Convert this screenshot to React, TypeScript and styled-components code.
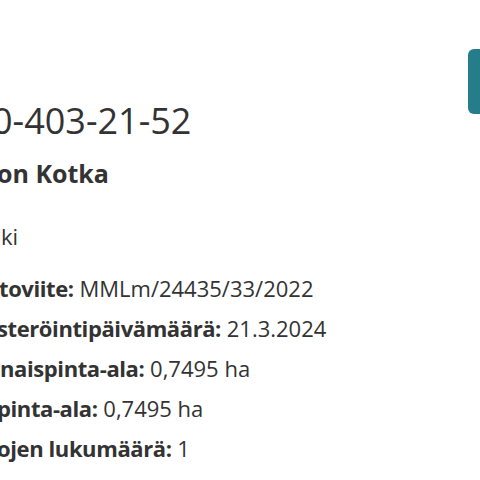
import styled, { createGlobalStyle } from "styled-components";

const GlobalStyle = createGlobalStyle`
  html, body {
    margin: 0;
    padding: 0;
    background: #ffffff;
    overflow: hidden;
  }
  body {
    font-family: "Open Sans", "Noto Sans", sans-serif;
    color: #333333;
  }
`;

const details = [
  { label: "toviite:", value: "MMLm/24435/33/2022", cut: 1 },
  { label: "steröintipäivämäärä:", value: "21.3.2024", cut: 3 },
  { label: "naispinta-ala:", value: "0,7495 ha", cut: 0 },
  { label: "pinta-ala:", value: "0,7495 ha", cut: 3 },
  { label: "ojen lukumäärä:", value: "1", cut: 3 },
];

export default function App() {
  return (
    <>
      <GlobalStyle />
      <Page>
        <Info>
          <Title $cut={8}>0-403-21-52</Title>
          <Name $cut={3}>on Kotka</Name>
          <Town>ki</Town>
          <List>
            {details.map((d) => (
              <Row key={d.label} $cut={d.cut}>
                <b>{d.label}</b> {d.value}
              </Row>
            ))}
          </List>
        </Info>
        <ActionButton aria-label="action" />
      </Page>
    </>
  );
}

const Page = styled.div`
  width: 480px;
  height: 480px;
  display: flex;
  justify-content: space-between;
  align-items: flex-start;
  overflow: hidden;
`;

const Info = styled.div`
  display: flex;
  flex-direction: column;
  padding-top: 99px;
`;

const Title = styled.h1<{ $cut: number }>`
  margin: 0 0 0 -${(p) => p.$cut}px;
  font-size: 36px;
  font-weight: 400;
  line-height: 44px;
  white-space: nowrap;
`;

const Name = styled.h2<{ $cut: number }>`
  margin: 10px 0 0 -${(p) => p.$cut}px;
  font-size: 25px;
  font-weight: 700;
  line-height: 40px;
  white-space: nowrap;
`;

const Town = styled.p`
  margin: 29px 0 0 1px;
  font-size: 22px;
  line-height: 28px;
`;

const List = styled.div`
  display: flex;
  flex-direction: column;
  margin-top: 18px;
`;

const Row = styled.p<{ $cut: number }>`
  margin: 0 0 0 -${(p) => p.$cut}px;
  font-size: 22px;
  line-height: 40px;
  white-space: nowrap;
  b {
    font-weight: 700;
    letter-spacing: -0.4px;
  }
`;

const ActionButton = styled.button`
  margin-top: 49px;
  margin-right: -20px;
  width: 32px;
  height: 65px;
  border: none;
  border-radius: 6px;
  background: #257c8a;
  flex-shrink: 0;
`;
